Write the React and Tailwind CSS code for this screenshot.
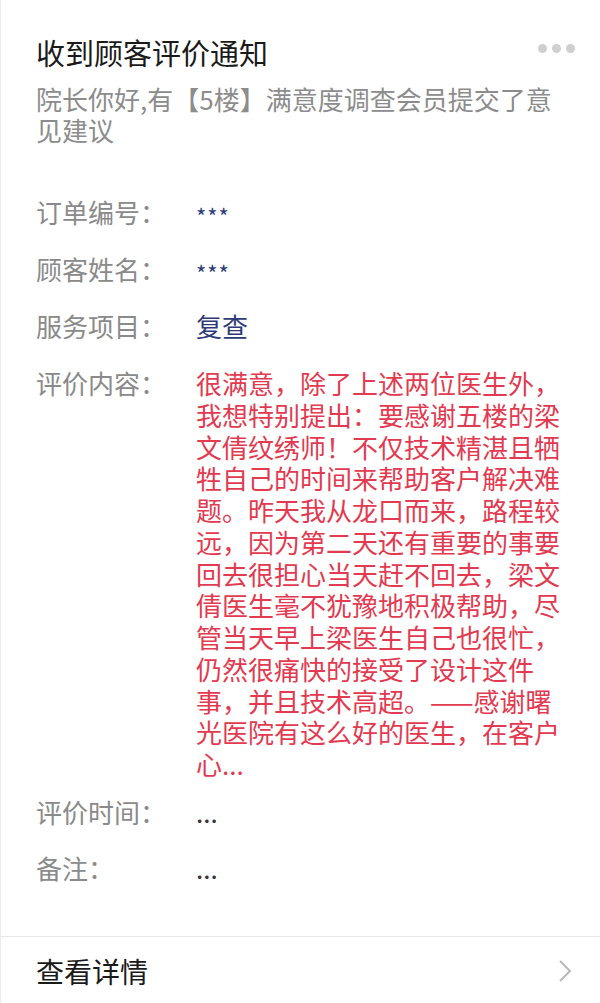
const FONT = { fontFamily: '"Noto Sans CJK SC", "Noto Sans", sans-serif' };

const review = [
  '很满意，除了上述两位医生外，',
  '我想特别提出：要感谢五楼的梁',
  '文倩纹绣师！不仅技术精湛且牺',
  '牲自己的时间来帮助客户解决难',
  '题。昨天我从龙口而来，路程较',
  '远，因为第二天还有重要的事要',
  '回去很担心当天赶不回去，梁文',
  '倩医生毫不犹豫地积极帮助，尽',
  '管当天早上梁医生自己也很忙，',
  '仍然很痛快的接受了设计这件',
  '事，并且技术高超。——感谢曙',
  '光医院有这么好的医生，在客户',
  '心...',
];

function Row({ label, children, className = '' }) {
  return (
    <div className={`flex text-[26px] leading-[32px] ${className}`}>
      <div className="h-[32px] w-[160px] shrink-0 text-[#8a8a8a]">{label}</div>
      <div className="flex-1">{children}</div>
    </div>
  );
}

function Value({ children, className = '' }) {
  return <div className={`flex h-[32px] items-center ${className}`}>{children}</div>;
}

export default function App() {
  return (
    <div className="min-h-screen bg-white border-l border-[#ececec]" style={FONT}>
      <div className="px-[35px] pt-[32px]">
        <div className="flex items-center justify-between">
          <h1 className="text-[29px] leading-[40px] text-[#1a1a1a]">收到顾客评价通知</h1>
          <div className="mr-[-10px] mt-[-7px] flex gap-[5px]">
            <span className="h-[9px] w-[9px] rounded-full bg-[#cfcfcf]" />
            <span className="h-[9px] w-[9px] rounded-full bg-[#cfcfcf]" />
            <span className="h-[9px] w-[9px] rounded-full bg-[#cfcfcf]" />
          </div>
        </div>
        <p className="mt-[11px] text-[26px] leading-[31px] text-[#8c8c8c]">
          院长你好,有【5楼】满意度调查会员提交了意见建议
        </p>

        <div className="mt-[51px] flex flex-col gap-[25px]">
          <Row label="订单编号：">
            <Value className="pt-[5px] text-[22px] leading-none tracking-[1px] text-[#2f3c7c]">***</Value>
          </Row>
          <Row label="顾客姓名：">
            <Value className="pt-[5px] text-[22px] leading-none tracking-[1px] text-[#2f3c7c]">***</Value>
          </Row>
          <Row label="服务项目：">
            <Value className="text-[#2e3a76]">复查</Value>
          </Row>
          <Row label="评价内容：">
            <div className="leading-[31.75px] text-[#e23a50] whitespace-nowrap">
              {review.map((line, i) => (
                <div key={i} className="h-[31.75px]">{line}</div>
              ))}
            </div>
          </Row>
          <Row label="评价时间：" className="mt-[-9px]">
            <Value className="text-[#333]">...</Value>
          </Row>
          <Row label="备注：" className="mt-[-1px]">
            <Value className="text-[#333]">...</Value>
          </Row>
        </div>
      </div>

      <div className="mt-[52px] border-t border-[#e8e8e8]">
        <div className="flex h-[68px] items-center justify-between px-[35px]">
          <span className="text-[28px] leading-[40px] text-[#1a1a1a]">查看详情</span>
          <svg width="14" height="24" viewBox="0 0 14 24" className="mr-[-7px]">
            <path d="M2 2 L12 12 L2 22" fill="none" stroke="#b8b8b8" strokeWidth="2" />
          </svg>
        </div>
      </div>
    </div>
  );
}
